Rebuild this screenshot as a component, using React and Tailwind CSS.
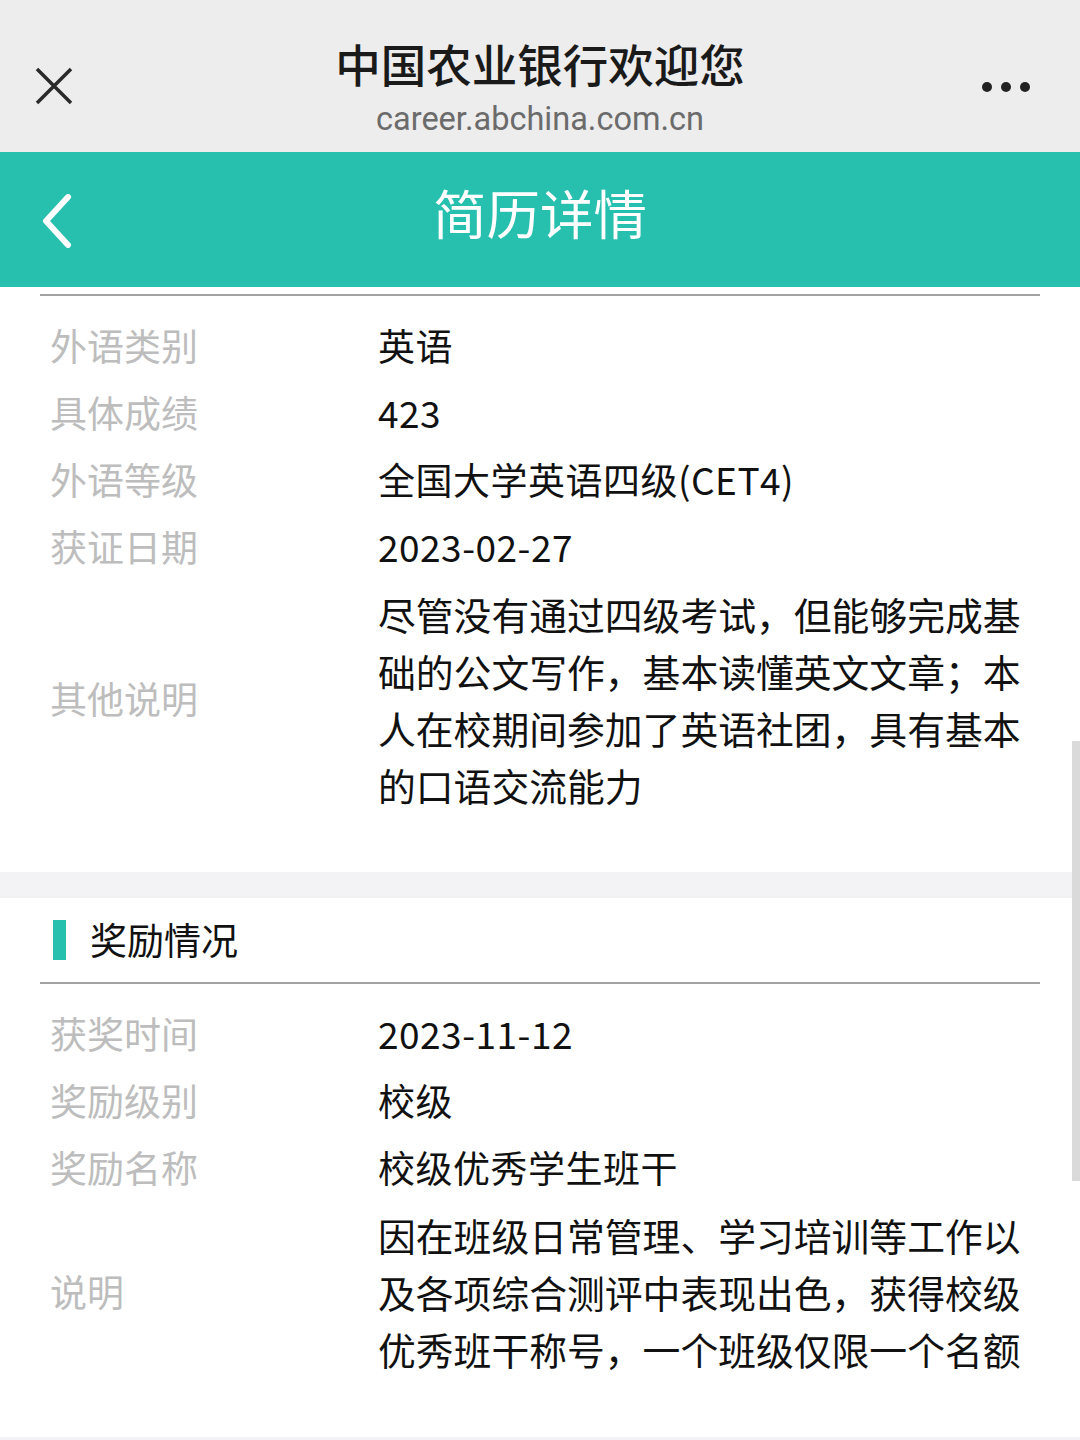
import React from 'react';

const font = { fontFamily: '"Noto Sans CJK SC", "Noto Sans", sans-serif' };

const language = [
  { label: '外语类别', value: '英语' },
  { label: '具体成绩', value: '423' },
  { label: '外语等级', value: '全国大学英语四级(CET4)' },
  { label: '获证日期', value: '2023-02-27' },
];

const awards = [
  { label: '获奖时间', value: '2023-11-12' },
  { label: '奖励级别', value: '校级' },
  { label: '奖励名称', value: '校级优秀学生班干' },
];

const Row = ({ label, value }) => (
  <div className="flex items-center h-[67px]">
    <div className="w-[338px] pl-[10px] text-[37px] text-[#bdbdbd]">{label}</div>
    <div className="text-[37px] text-[#111] tracking-[0.5px]">{value}</div>
  </div>
);

const MultiRow = ({ label, value }) => (
  <div className="flex items-center pt-[5px]">
    <div className="w-[338px] pl-[10px] text-[37px] text-[#bdbdbd]">{label}</div>
    <div className="w-[646px] text-[37.8px] leading-[57px] text-[#111] break-all">{value}</div>
  </div>
);

const App = () => {
  return (
    <div className="relative w-[1080px] h-[1440px] overflow-hidden bg-white" style={font}>
      {/* browser top bar */}
      <div className="relative h-[152px] bg-[#ededed] flex flex-col items-center">
        <div className="mt-[33px] text-[45.5px] leading-[60px] font-medium text-[#1a1a1a]">中国农业银行欢迎您</div>
        <div className="mt-[6px] text-[32.5px] leading-[40px] text-[#6b6b6b]" style={{ fontFamily: '"Roboto", sans-serif' }}>career.abchina.com.cn</div>
        <svg className="absolute left-[34px] top-[66px]" width="40" height="40" viewBox="0 0 40 40">
          <path d="M3 3 L37 37 M37 3 L3 37" stroke="#2a2a2a" strokeWidth="3.5" fill="none" />
        </svg>
        <svg className="absolute left-[980px] top-[79px]" width="54" height="16" viewBox="0 0 54 16">
          <circle cx="7" cy="8" r="5" fill="#222" />
          <circle cx="26" cy="8" r="5" fill="#222" />
          <circle cx="45" cy="8" r="5" fill="#222" />
        </svg>
      </div>

      {/* teal header */}
      <div className="relative h-[135px] bg-[#27bfae] flex items-center justify-center pb-[14px]">
        <div className="text-[53.5px] text-white">简历详情</div>
        <svg className="absolute left-[38px] top-[42px]" width="36" height="54" viewBox="0 0 36 54">
          <path d="M30 3 L8 27 L30 51" stroke="white" strokeWidth="6" fill="none" strokeLinecap="round" strokeLinejoin="round" />
        </svg>
      </div>

      {/* language section */}
      <div className="pt-[7px] pb-[59px]">
        <div className="mx-[40px] h-[2px] bg-[#a3a3a3]" />
        <div className="px-[40px] pt-[16px]">
          {language.map((r) => (
            <Row key={r.label} {...r} />
          ))}
          <MultiRow
            label="其他说明"
            value="尽管没有通过四级考试，但能够完成基础的公文写作，基本读懂英文文章；本人在校期间参加了英语社团，具有基本的口语交流能力"
          />
        </div>
      </div>

      <div className="h-[26px] bg-[#f3f3f6]" />

      {/* awards section */}
      <div className="h-[539px]">
        <div className="h-[84px] flex items-center px-[53px]">
          <div className="w-[13px] h-[40px] bg-[#27bfae]" />
          <div className="ml-[24px] text-[37px] text-[#111]">奖励情况</div>
        </div>
        <div className="mx-[40px] h-[2px] bg-[#a3a3a3]" />
        <div className="px-[40px] pt-[16px]">
          {awards.map((r) => (
            <Row key={r.label} {...r} />
          ))}
          <MultiRow
            label="说明"
            value="因在班级日常管理、学习培训等工作以及各项综合测评中表现出色，获得校级优秀班干称号，一个班级仅限一个名额"
          />
        </div>
      </div>

      <div className="h-[10px] bg-[#f3f3f6]" />

      {/* scroll indicator */}
      <div className="absolute right-0 top-[741px] w-[8px] h-[440px] bg-[#dadada]" />
    </div>
  );
};

export default App;
